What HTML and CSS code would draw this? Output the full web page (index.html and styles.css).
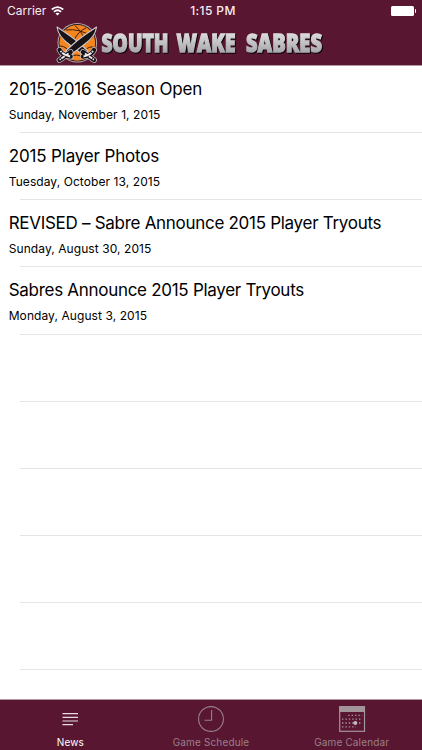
FILE: index.html
```html
<!DOCTYPE html>
<html lang="en">

<head>
    <meta charset="UTF-8">
    <meta name="viewport" content="width=device-width, initial-scale=1.0">
    <title>South Wake Sabres</title>
    <link rel="stylesheet" href="styles.css">
</head>

<body>
    <header>
        <div class="status">
            <div class="carrier">
                <span>Carrier</span>
                <svg class="wifi" width="13" height="10" viewBox="0 0 13 10" fill="none" stroke="#fff" stroke-width="1.7">
                    <path d="M.8 3.5Q6.5-1.4 12.2 3.5M2.9 5.8Q6.5 2.7 10.1 5.8" />
                    <path d="M4.5 7.5Q6.5 5.8 8.5 7.5L6.5 9.6Z" fill="#fff" stroke="none" />
                </svg>
            </div>
            <span class="time">1:15 PM</span>
            <div class="battery"></div>
        </div>
        <div class="brand">
            <svg class="logo" width="44" height="43" viewBox="0 0 44 43">
                <circle cx="22.3" cy="20.8" r="19.8" fill="#b7a9ae" />
                <circle cx="22.3" cy="20.8" r="18.8" fill="#2b1a1c" />
                <circle cx="22.3" cy="20.8" r="17.9" fill="#f5851f" />
                <g fill="none" stroke="#40200c" stroke-width="1">
                    <path d="M11 8Q24 6 38 15M20 3.5Q29 12 31 22M31 6Q23 9 18 20M5 24Q12 24 15 32M38 25Q31 24 28 33M14 36Q21 30 29 36" />
                </g>
                <g id="sabre">
                    <path d="M2 5C3 13 8 18 15 23L28 33L33 29L23 20C16 14 8 9 2 5Z" fill="#171317" stroke="#cfc7ca" stroke-width="1.1" stroke-linejoin="round" />
                    <path d="M28 30L39 38M28 34.5Q36 34 39 28" fill="none" stroke="#c9bfc3" stroke-width="5.8" stroke-linecap="round" />
                    <path d="M28 30L39 38M28 34.5Q36 34 39 28" fill="none" stroke="#171317" stroke-width="4.4" stroke-linecap="round" />
                    <path d="M30 31.5L39 37.7M28.5 34.5Q35 33 38 29" fill="none" stroke="#f0ecee" stroke-width="1.9" stroke-dasharray="4 .8" />
                </g>
                <use href="#sabre" transform="matrix(-1 0 0 1 43.6 0)" />
            </svg>
            <svg class="wordmark" width="230" height="40" viewBox="0 0 230 40">
                <defs>
                    <linearGradient id="silver" x1="0" y1="0" x2="0" y2="1">
                        <stop offset=".2" stop-color="#e2e2e2" />
                        <stop offset=".85" stop-color="#a5a5aa" />
                    </linearGradient>
                </defs>
                <text x="2.5" y="29.5" textLength="67" lengthAdjust="spacingAndGlyphs">SOUTH</text>
                <text x="77.5" y="29.5" textLength="59" lengthAdjust="spacingAndGlyphs">WAKE</text>
                <text x="147" y="29.5" textLength="76" lengthAdjust="spacingAndGlyphs">SABRES</text>
            </svg>
        </div>
    </header>

    <ul class="news">
        <li>
            <h2 class="short">2015-2016 Season Open</h2>
            <p>Sunday, November 1, 2015</p>
        </li>
        <li>
            <h2 class="short">2015 Player Photos</h2>
            <p>Tuesday, October 13, 2015</p>
        </li>
        <li>
            <h2>REVISED – Sabre Announce 2015 Player Tryouts</h2>
            <p>Sunday, August 30, 2015</p>
        </li>
        <li>
            <h2>Sabres Announce 2015 Player Tryouts</h2>
            <p>Monday, August 3, 2015</p>
        </li>
        <li></li>
        <li></li>
        <li></li>
        <li></li>
        <li></li>
    </ul>

    <nav>
        <a class="tab active">
            <svg width="28" height="28" viewBox="0 0 28 28" fill="none" stroke="#e6dce0" stroke-width="1.2">
                <path d="M6.5 8.6h15.5M6.5 12.4h15.5M6.5 16h15.5M6.5 19.6h10.5" />
            </svg>
            <span>News</span>
        </a>
        <a class="tab">
            <svg width="28" height="28" viewBox="0 0 28 28" fill="none" stroke="#98808a" stroke-width="1.1">
                <circle cx="14" cy="14" r="12.4" />
                <path d="M14.6 5V15.2H7.5" />
            </svg>
            <span>Game Schedule</span>
        </a>
        <a class="tab">
            <svg width="28" height="28" viewBox="0 0 28 28" fill="none" stroke="#a3969b">
                <rect x="1.7" y="1.7" width="24.8" height="24.6" stroke-width="1.2" />
                <path d="M1.2 1.2h25.8v5.8h-25.8z" fill="#a3969b" stroke="none" />
                <path d="M10.2 10.4h14M4 14.2h20M4 18h20M4 21.8h14" stroke-width="1.3" stroke-dasharray="1.4 2" />
                <circle cx="17.3" cy="18" r="2" fill="#c4bbbf" stroke="none" />
            </svg>
            <span>Game Calendar</span>
        </a>
    </nav>
</body>

</html>
```
FILE: styles.css
```css
* {
    box-sizing: border-box;
}

body {
    margin: 0;
    height: 750px;
    display: flex;
    flex-direction: column;
    overflow: hidden;
    background: #fff;
    color: #000;
    font-family: Inter, "Liberation Sans", sans-serif;
}

header {
    flex: none;
    height: 65.8px;
    background: #591631;
    border-bottom: 1px solid #b197a2;
}

.status {
    height: 22px;
    padding: 0 6px 0 7px;
    display: grid;
    grid-template-columns: 1fr auto 1fr;
    align-items: center;
    color: #f5edf0;
    font-size: 12px;
    line-height: 22px;
}

.carrier {
    display: flex;
    align-items: center;
    gap: 5px;
}

.carrier svg {
    margin-top: -1px;
}

.time {
    font-weight: 500;
    letter-spacing: 0.4px;
    padding-left: 3px;
}

.battery {
    justify-self: end;
    width: 23px;
    height: 10px;
    margin-right: 2px;
    background: #fff;
    border-radius: 1.5px;
    position: relative;
}

.battery::after {
    content: "";
    position: absolute;
    left: 23.5px;
    top: 3px;
    width: 1.5px;
    height: 4px;
    background: #fff;
    border-radius: 0 1px 1px 0;
}

.brand {
    display: flex;
    padding-left: 55px;
}

.wordmark {
    overflow: visible;
    filter: drop-shadow(1.6px 1.6px 0 #0c0408);
}

.wordmark text {
    font-family: "Open Sans", sans-serif;
    font-size: 25px;
    font-weight: 800;
    fill: url(#silver);
    stroke: url(#silver);
    stroke-width: 1.3;
}

.news {
    flex: 1;
    margin: 0;
    padding: 0;
    list-style: none;
}

.news li {
    height: 67.2px;
    padding: 12px 0 0 8.7px;
    background: linear-gradient(#e5e5e7, #e5e5e7) 20px 100% / 100% 1px no-repeat;
}

h2 {
    margin: 0;
    font-size: 17px;
    line-height: 23px;
    font-weight: 400;
    letter-spacing: -0.29px;
    white-space: nowrap;
}

.short {
    letter-spacing: -0.16px;
}

p {
    margin: 4.8px 0 0;
    font-size: 12px;
    line-height: 18px;
    letter-spacing: 0.08px;
}

nav {
    flex: none;
    height: 51px;
    display: flex;
    background: #591631;
    border-top: 1px solid #b197a2;
}

.tab {
    flex: 1;
    display: flex;
    flex-direction: column;
    align-items: center;
    padding-top: 5px;
    color: #98808a;
    font-size: 10px;
    line-height: 14px;
    letter-spacing: 0.15px;
}

.tab span {
    margin-top: 2px;
}

.active {
    color: #fff;
}
```
